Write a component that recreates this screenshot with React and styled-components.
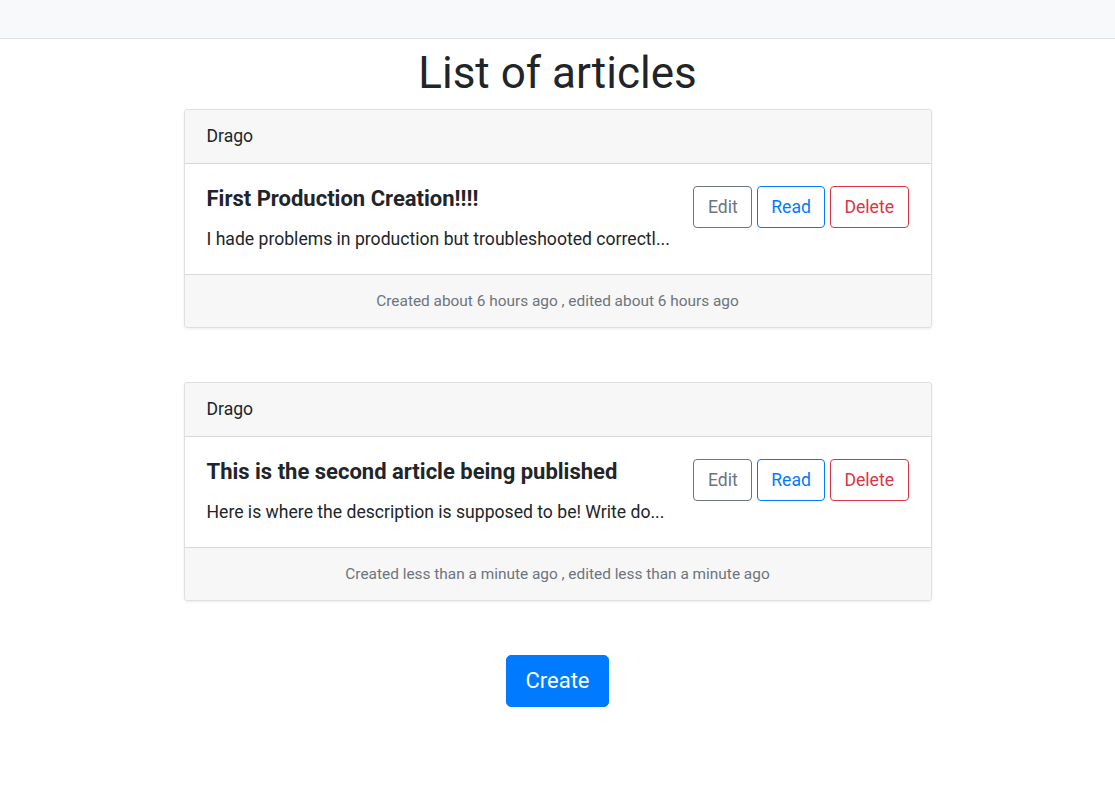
import React from "react";
import styled, { createGlobalStyle } from "styled-components";

const GlobalStyle = createGlobalStyle`
  body {
    margin: 0;
    background: #fff;
    font-family: Roboto, "Liberation Sans", Arial, sans-serif;
    font-size: 17.6px;
    color: #212529;
  }
`;

const Navbar = styled.nav`
  height: 38px;
  background-color: #f8f9fa;
  border-bottom: 1px solid #dee2e6;
`;

const Main = styled.main`
  display: flex;
  flex-direction: column;
  align-items: center;
  padding-top: 7px;
`;

const Title = styled.h1`
  margin: 0 0 9px;
  font-size: 44px;
  font-weight: 400;
  line-height: 54px;
`;

const CardList = styled.div`
  width: 748px;
  display: flex;
  flex-direction: column;
  gap: 54px;
`;

const Card = styled.div`
  border: 1px solid rgba(0, 0, 0, 0.125);
  border-radius: 4px;
  background: #fff;
  box-shadow: 0 1px 3px rgba(0, 0, 0, 0.08);
  overflow: hidden;
`;

const CardHeader = styled.div`
  padding: 15px 22px;
  line-height: 23px;
  font-size: 17.6px;
  background: #f7f7f7;
  border-bottom: 1px solid rgba(0, 0, 0, 0.125);
`;

const CardBody = styled.div`
  display: flex;
  justify-content: space-between;
  align-items: flex-start;
  padding: 22px;
`;

const Text = styled.div`
  display: flex;
  flex-direction: column;
`;

const ArticleTitle = styled.h5`
  margin: 0 0 16px;
  font-size: 22px;
  font-weight: 700;
  line-height: 25px;
`;

const Description = styled.p`
  margin: 0 0 1px;
  font-size: 17.6px;
  line-height: 24px;
`;

const Actions = styled.div`
  display: flex;
  gap: 4.5px;
`;

const colors = {
  secondary: "#6c757d",
  primary: "#007bff",
  danger: "#dc3545",
};

const OutlineButton = styled.button`
  font-family: inherit;
  font-size: 17.6px;
  line-height: 24px;
  padding: 8px 13.5px;
  border-radius: 4px;
  background: transparent;
  color: ${(p) => colors[p.$variant]};
  border: 1px solid ${(p) => colors[p.$variant]};
  cursor: pointer;
`;

const CardFooter = styled.div`
  padding: 15px 22px;
  line-height: 22px;
  font-size: 15.4px;
  text-align: center;
  color: #6c757d;
  background: #f7f7f7;
  border-top: 1px solid rgba(0, 0, 0, 0.125);
`;

const CreateButton = styled.button`
  margin-top: 54px;
  font-family: inherit;
  font-size: 22px;
  line-height: 32px;
  padding: 9px 18px;
  border-radius: 5px;
  border: 1px solid #007bff;
  background: #007bff;
  color: #fff;
  cursor: pointer;
`;

const articles = [
  {
    author: "Drago",
    title: "First Production Creation!!!!",
    description: "I hade problems in production but troubleshooted correctl...",
    footer: "Created about 6 hours ago , edited about 6 hours ago",
  },
  {
    author: "Drago",
    title: "This is the second article being published",
    description: "Here is where the description is supposed to be! Write do...",
    footer: "Created less than a minute ago , edited less than a minute ago",
  },
];

const App = () => {
  return (
    <>
      <GlobalStyle />
      <Navbar />
      <Main>
        <Title>List of articles</Title>
        <CardList>
          {articles.map((a, i) => (
            <Card key={i}>
              <CardHeader>{a.author}</CardHeader>
              <CardBody>
                <Text>
                  <ArticleTitle>{a.title}</ArticleTitle>
                  <Description>{a.description}</Description>
                </Text>
                <Actions>
                  <OutlineButton $variant="secondary">Edit</OutlineButton>
                  <OutlineButton $variant="primary">Read</OutlineButton>
                  <OutlineButton $variant="danger">Delete</OutlineButton>
                </Actions>
              </CardBody>
              <CardFooter>{a.footer}</CardFooter>
            </Card>
          ))}
        </CardList>
        <CreateButton>Create</CreateButton>
      </Main>
    </>
  );
};

export default App;
